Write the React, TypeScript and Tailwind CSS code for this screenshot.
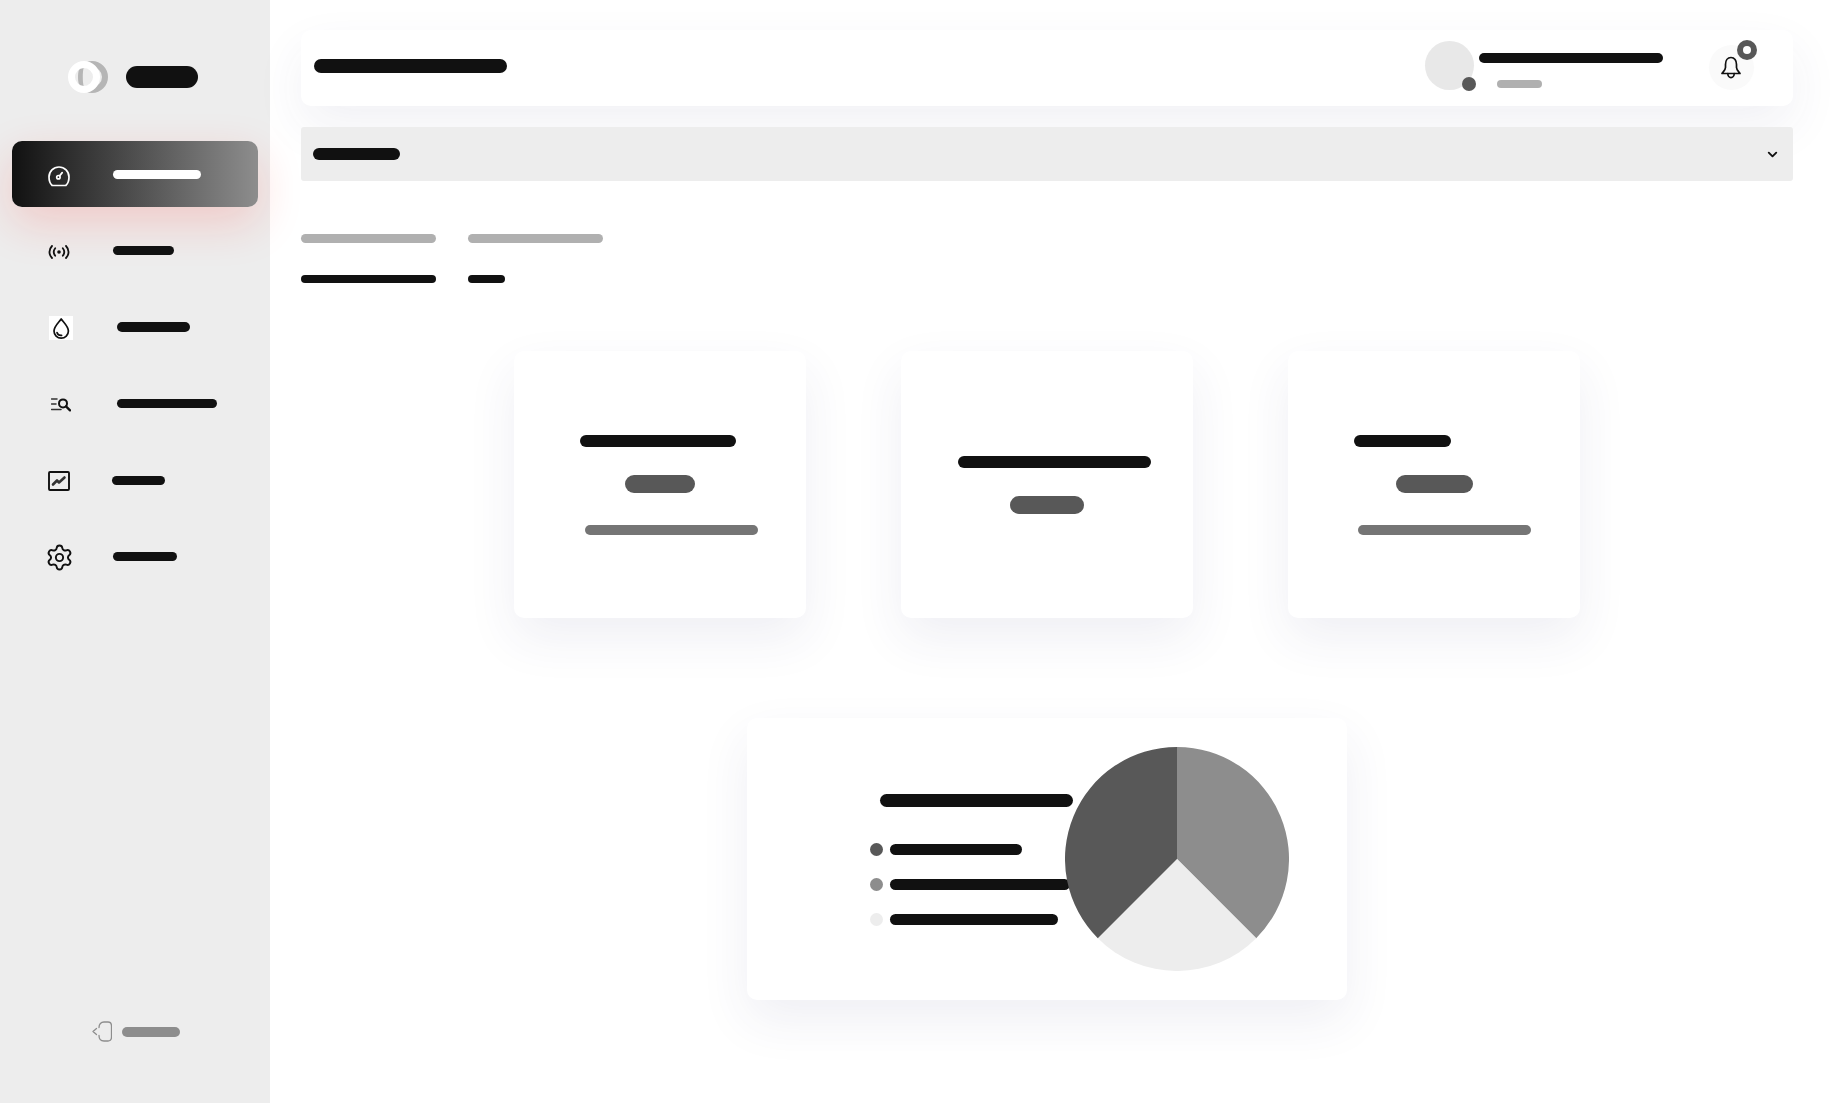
import React from "react";
import { Settings, ChevronDown } from "lucide-react";

const GaugeIcon = () => (
  <svg viewBox="0 0 22 22" className="w-[22px] h-[22px]" fill="none" stroke="white" strokeWidth="1.7" strokeLinecap="round" strokeLinejoin="round">
    <path d="M4.2 20.5 H17.8 C19.9 18.6 21 15.9 21 12 A10 10 0 0 0 1 12 C1 15.9 2.1 18.6 4.2 20.5 Z" />
    <circle cx="10.4" cy="12.2" r="1.7" />
    <path d="M11.8 10.6 L14.2 7.6" />
  </svg>
);

const RadioIcon = () => (
  <svg viewBox="0 0 22 14" className="w-[22px] h-[14px]" fill="none" stroke="#111" strokeWidth="1.8" strokeLinecap="round">
    <path d="M4 1 C0.6 4.5 0.6 9.5 4 13" />
    <path d="M7.2 3.2 C5.4 5.5 5.4 8.5 7.2 10.8" />
    <path d="M18 1 C21.4 4.5 21.4 9.5 18 13" />
    <path d="M14.8 3.2 C16.6 5.5 16.6 8.5 14.8 10.8" />
    <circle cx="11" cy="7" r="1.8" fill="#111" stroke="none" />
  </svg>
);

const DropIcon = () => (
  <div className="w-6 h-6 bg-white flex items-center justify-center">
    <svg viewBox="0 0 24 24" className="w-6 h-6" fill="none" stroke="#111" strokeWidth="1.7" strokeLinecap="round" strokeLinejoin="round">
      <path d="M12.2 3 C10 6.2 5 10.4 5 15 A7.2 7.2 0 0 0 19.4 15 C19.4 10.4 14.4 6.2 12.2 3 Z" />
      <path d="M8 16.5 C8.6 18.6 10.3 19.6 12.6 19.4" />
    </svg>
  </div>
);

const SearchListIcon = () => (
  <svg viewBox="0 0 20 14" className="w-5 h-[14px]" fill="none" stroke="#111" strokeLinecap="round">
    <path d="M0.5 1 H6 M0.5 6 H5 M0.5 11.5 H10" strokeWidth="1.5" opacity="0.85" />
    <circle cx="12" cy="5.4" r="4" strokeWidth="2" />
    <path d="M15 8.4 L19 12.4" strokeWidth="2.3" />
  </svg>
);

const ChartIcon = () => (
  <svg viewBox="0 0 22 20" className="w-[22px] h-5" fill="none" stroke="#111" strokeLinejoin="round" strokeLinecap="round">
    <rect x="1" y="1" width="20" height="18" rx="1" strokeWidth="1.9" />
    <path d="M5 13.5 L9 9.5 L11 11.5 L16.5 6.5" strokeWidth="2.6" stroke="#333" />
  </svg>
);

const LogoutIcon = () => (
  <svg viewBox="0 0 20 21" className="w-5 h-[21px]" fill="none" stroke="#8d8d8d" strokeWidth="1.3" strokeLinecap="round" strokeLinejoin="round">
    <path d="M4.5 7.5 L1 10.5 L4.5 13.5" />
    <path d="M7 6.5 C7 3 9 1 12 1 H16 C18.2 1 19.5 2.5 19.5 5 V16 C19.5 18.5 18.2 20 16 20 H12 C9 20 7 18 7 14.5" />
  </svg>
);

const BellIcon = () => (
  <svg viewBox="0 0 20 23" className="w-5 h-[23px] -ml-[1px]" fill="none" stroke="#111" strokeWidth="1.7" strokeLinecap="round" strokeLinejoin="round">
    <path d="M10 1.5 C6.5 1.5 4.5 4.8 4.5 8.5 V11.5 C4.5 13.8 2.5 15.5 1 17.5 H19 C17.5 15.5 15.5 13.8 15.5 11.5 V8.5 C15.5 4.8 13.5 1.5 10 1.5 Z" />
    <path d="M6.8 17.5 C6.8 20 8.4 21.6 10 21.6 C11.6 21.6 13.2 20 13.2 17.5" />
  </svg>
);

const Logo = () => (
  <svg viewBox="0 0 40 32" className="w-10 h-8 shrink-0">
    <circle cx="24" cy="16" r="13" fill="none" stroke="#b5b5b5" strokeWidth="6" />
    <path d="M13 5.5 C9 7 7 11 7 16 C7 21 9 25 13 26.5 C21 26 23 21 23 16 C23 11 21 6 13 5.5 Z" fill="#ededed" />
    <path d="M12.5 5.5 C10.5 8 10 12 10 16 C10 20 10.5 24 12.5 26.5 H16 C15 23 14.8 20 14.8 16 C14.8 12 15 9 16 5.5 Z" fill="#b5b5b5" />
    <circle cx="16" cy="16" r="12.5" fill="none" stroke="#ffffff" strokeWidth="7" />
  </svg>
);

const navRows = [
  { icon: <GaugeIcon />, box: "ml-[36px] w-[22px] mt-[3px]", pill: "ml-[43px] w-[88px] h-[9px] bg-white", row: "bg-[linear-gradient(90deg,#111111,#8d8d8d)] rounded-[10px] shadow-[0_16px_45px_rgba(255,40,30,0.18)]" },
  { icon: <RadioIcon />, box: "ml-[36px] w-[22px] mt-[2px]", pill: "ml-[43px] w-[61px] h-[9px] bg-[#111111]", row: "" },
  { icon: <DropIcon />, box: "ml-[37px] w-6 mt-[2px]", pill: "ml-[44px] w-[73px] h-[10px] bg-[#111111]", row: "" },
  { icon: <SearchListIcon />, box: "ml-[39px] w-5 mt-[2px]", pill: "ml-[46px] w-[100px] h-[9px] bg-[#111111]", row: "" },
  { icon: <ChartIcon />, box: "ml-[36px] w-[22px] mt-[2px]", pill: "ml-[42px] w-[53px] h-[9px] bg-[#111111]", row: "" },
  { icon: <Settings size={29} color="#111" strokeWidth={1.6} className="shrink-0" />, box: "ml-[36px] w-[23px] mt-[2px]", pill: "ml-[42px] w-[64px] h-[9px] bg-[#111111]", row: "" },
];

const cardClass =
  "bg-white rounded-[10px] shadow-[0_20px_50px_rgba(50,50,120,0.08)]";

const Legend = ({ dot, w }: { dot: string; w: string }) => (
  <div className="flex items-center ml-[123px] h-[13px]">
    <div className={`w-[13px] h-[13px] rounded-full ${dot}`} />
    <div className={`ml-[7px] h-[11px] rounded-full bg-[#111111] ${w}`} />
  </div>
);

export default function App() {
  return (
    <div className="flex w-full h-screen min-h-[1103px] bg-white overflow-hidden">
      <aside className="w-[270px] shrink-0 h-full bg-[#ededed] flex flex-col px-3">
        <div className="flex items-center pt-[61px] pl-[56px] h-[93px]">
          <Logo />
          <div className="ml-[18px] w-[72px] h-[22px] rounded-full bg-[#111111]" />
        </div>
        <nav className="mt-[48px] flex flex-col gap-[10.6px]">
          {navRows.map((r, i) => (
            <div key={i} className={`h-[66px] w-[246px] flex items-center ${r.row}`}>
              <div className={`${r.box} flex items-center justify-center shrink-0`}>{r.icon}</div>
              <div className={`${r.pill} rounded-full`} />
            </div>
          ))}
        </nav>
        <div className="mt-auto pb-[61px] flex items-center pl-[80px]">
          <LogoutIcon />
          <div className="ml-[10px] w-[58px] h-[10px] rounded-full bg-[#8d8d8d]" />
        </div>
      </aside>

      <main className="flex-1 min-w-0 pl-[31px] pr-[41px] pt-[30px]">
        <header className="h-[76px] bg-white rounded-[10px] shadow-[0_20px_50px_rgba(50,50,120,0.07)] flex items-center pl-[13px]">
          <div className="w-[193px] h-[14px] rounded-full bg-[#111111] -mt-[4px]" />
          <div className="ml-auto self-start mt-[11px] flex items-start">
            <div className="relative w-[49px] h-[49px] rounded-full bg-[#e8e8e8]">
              <div className="absolute left-[37px] top-[36px] w-[14px] h-[14px] rounded-full bg-[#585858]" />
            </div>
            <div className="ml-[5px] pt-[12px] w-[184px]">
              <div className="w-[184px] h-[10px] rounded-full bg-[#111111]" />
              <div className="ml-[18px] mt-[17px] w-[45px] h-[8px] rounded-full bg-[#b0b0b0]" />
            </div>
            <div className="relative ml-[46px] mr-[39px] mt-[4px] w-[45px] h-[45px] rounded-full bg-[#fafafa] flex items-center justify-center">
              <BellIcon />
              <div className="absolute left-[28px] top-[-5px] w-5 h-5 rounded-full bg-[#585858] flex items-center justify-center">
                <div className="w-2 h-2 rounded-full bg-white" />
              </div>
            </div>
          </div>
        </header>

        <div className="mt-[21px] h-[54px] bg-[#ededed] rounded-[3px] flex items-center pl-3 pr-[13px]">
          <div className="w-[87px] h-3 rounded-full bg-[#111111]" />
          <ChevronDown size={15} color="#111" strokeWidth={3} className="ml-auto" />
        </div>

        <div className="mt-[53px] flex gap-8">
          <div className="w-[135px] h-[9px] rounded-full bg-[#b0b0b0]" />
          <div className="w-[135px] h-[9px] rounded-full bg-[#b0b0b0]" />
        </div>
        <div className="mt-[32px] flex gap-8">
          <div className="w-[135px] h-2 rounded-full bg-[#111111]" />
          <div className="w-[37px] h-2 rounded-full bg-[#111111]" />
        </div>

        <div className="mt-[68px] flex justify-center gap-[95px]">
          <div className={`w-[292px] h-[267px] pt-[84px] ${cardClass}`}>
            <div className="ml-[66px] w-[156px] h-3 rounded-full bg-[#111111]" />
            <div className="ml-[111px] mt-[28px] w-[70px] h-[18px] rounded-full bg-[#585858]" />
            <div className="ml-[71px] mt-[32px] w-[173px] h-[10px] rounded-full bg-[#757575]" />
          </div>
          <div className={`w-[292px] h-[267px] pt-[105px] ${cardClass}`}>
            <div className="ml-[57px] w-[193px] h-3 rounded-full bg-[#111111]" />
            <div className="ml-[109px] mt-[28px] w-[74px] h-[18px] rounded-full bg-[#585858]" />
          </div>
          <div className={`w-[292px] h-[267px] pt-[84px] ${cardClass}`}>
            <div className="ml-[66px] w-[97px] h-3 rounded-full bg-[#111111]" />
            <div className="ml-[108px] mt-[28px] w-[77px] h-[18px] rounded-full bg-[#585858]" />
            <div className="ml-[70px] mt-[32px] w-[173px] h-[10px] rounded-full bg-[#757575]" />
          </div>
        </div>

        <div className={`relative mx-auto mt-[100px] w-[600px] h-[282px] pt-[76px] ${cardClass}`}>
          <div className="ml-[133px] w-[193px] h-[13px] rounded-full bg-[#111111]" />
          <div className="mt-[36px] flex flex-col gap-[22px]">
            <Legend dot="bg-[#585858]" w="w-[132px]" />
            <Legend dot="bg-[#8d8d8d]" w="w-[180px]" />
            <Legend dot="bg-[#ededed]" w="w-[168px]" />
          </div>
          <svg viewBox="0 0 224 224" className="absolute left-[318px] top-[29px] w-[224px] h-[224px]">
            <path d="M112 112 L112 0 A112 112 0 0 1 191.2 191.2 Z" fill="#8d8d8d" />
            <path d="M112 112 L191.2 191.2 A112 112 0 0 1 32.8 191.2 Z" fill="#ededed" />
            <path d="M112 112 L32.8 191.2 A112 112 0 0 1 112 0 Z" fill="#585858" />
          </svg>
        </div>
      </main>
    </div>
  );
}
